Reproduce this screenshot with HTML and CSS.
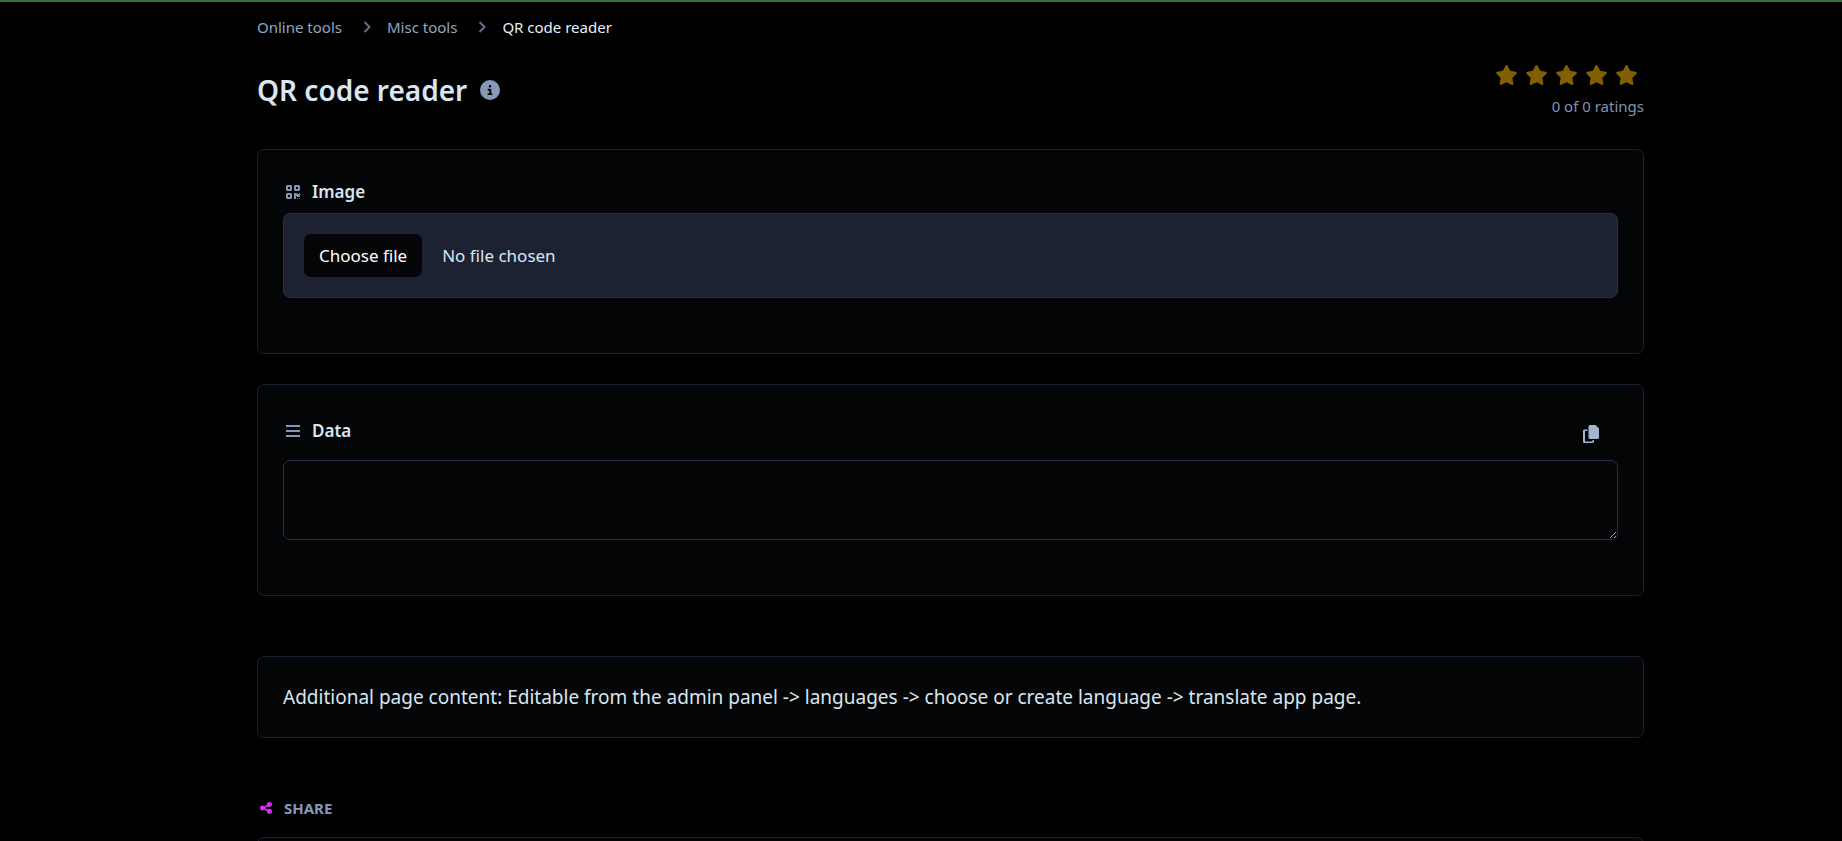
FILE: index.html
```html
<!DOCTYPE html>
<html lang="en">

<head>
    <meta charset="UTF-8">
    <meta name="viewport" content="width=device-width, initial-scale=1.0">
    <title>QR code reader</title>
    <link rel="stylesheet" href="styles.css">
</head>

<body>
    <main class="container">
        <nav aria-label="breadcrumb">
            <ol class="breadcrumbs">
                <li>
                    <a href="#">Online tools</a>
                    <svg class="chevron" viewBox="0 0 8 12" aria-hidden="true"><path d="M1.500 1l5 5-5 5" /></svg>
                </li>
                <li>
                    <a href="#">Misc tools</a>
                    <svg class="chevron" viewBox="0 0 8 12" aria-hidden="true"><path d="M1.500 1l5 5-5 5" /></svg>
                </li>
                <li class="active" aria-current="page">QR code reader</li>
            </ol>
        </nav>

        <header class="heading">
            <div class="title">
                <h1>QR code reader</h1>
                <svg class="info" viewBox="0 0 512 512" aria-hidden="true"><path d="M256 512A256 256 0 1 0 256 0a256 256 0 1 0 0 512zM216 336h24V272H216c-13.300 0-24-10.700-24-24s10.700-24 24-24h48c13.300 0 24 10.700 24 24v88h8c13.300 0 24 10.700 24 24s-10.700 24-24 24H216c-13.300 0-24-10.700-24-24s10.700-24 24-24zm40-208a32 32 0 1 1 0 64 32 32 0 1 1 0-64z" /></svg>
            </div>
            <div class="ratings">
                <div class="stars">
                    <button type="button" aria-label="1 star"><svg viewBox="0 0 576 512"><use href="#star" /></svg></button>
                    <button type="button" aria-label="2 stars"><svg viewBox="0 0 576 512"><use href="#star" /></svg></button>
                    <button type="button" aria-label="3 stars"><svg viewBox="0 0 576 512"><use href="#star" /></svg></button>
                    <button type="button" aria-label="4 stars"><svg viewBox="0 0 576 512"><use href="#star" /></svg></button>
                    <button type="button" aria-label="5 stars"><svg viewBox="0 0 576 512"><use href="#star" /></svg></button>
                </div>
                <div class="rating-count">0 of 0 ratings</div>
            </div>
        </header>

        <form class="card card-form">
            <label class="label" for="image">
                <svg class="label-icon" viewBox="0 0 448 512" aria-hidden="true"><path d="M0 80C0 53.500 21.500 32 48 32h96c26.500 0 48 21.500 48 48v96c0 26.500-21.500 48-48 48H48c-26.500 0-48-21.500-48-48V80zM64 96v64h64V96H64zM0 336c0-26.500 21.500-48 48-48h96c26.500 0 48 21.500 48 48v96c0 26.500-21.500 48-48 48H48c-26.500 0-48-21.500-48-48V336zm64 16v64h64V352H64zM304 32h96c26.500 0 48 21.500 48 48v96c0 26.500-21.500 48-48 48H304c-26.500 0-48-21.500-48-48V80c0-26.500 21.500-48 48-48zm80 64H320v64h64V96zM256 304c0-8.800 7.200-16 16-16h64c8.800 0 16 7.200 16 16s7.200 16 16 16h32c8.800 0 16-7.200 16-16s7.200-16 16-16s16 7.200 16 16v96c0 8.800-7.200 16-16 16H368c-8.800 0-16-7.200-16-16s-7.200-16-16-16s-16 7.200-16 16v64c0 8.800-7.200 16-16 16H272c-8.800 0-16-7.200-16-16V304zM368 480a16 16 0 1 1 0-32 16 16 0 1 1 0 32zm64 0a16 16 0 1 1 0-32 16 16 0 1 1 0 32z" /></svg>
                Image
            </label>
            <label class="file">
                <input class="file-input" type="file" id="image" accept="image/*">
                <span class="file-button">Choose file</span>
                <span>No file chosen</span>
            </label>
        </form>

        <section class="card card-form">
            <div class="label-row">
                <label class="label" for="data">
                    <svg class="label-icon" viewBox="0 0 14 16" aria-hidden="true"><path d="M0 2h14v2H0zM0 7h14v2H0zM0 12h14v2H0z" /></svg>
                    Data
                </label>
                <button class="copy" type="button" aria-label="Copy">
                    <svg viewBox="0 0 16 18" aria-hidden="true"><path d="M7 0h5.500L16 3.500v9a1.500 1.500 0 0 1-1.500 1.500h-7.500A1.500 1.500 0 0 1 5.500 12.500V1.500A1.500 1.500 0 0 1 7 0zM1.500 4.500H4.500V6H2V16.500h7.500v-1.500h1.500v1.500A1.500 1.500 0 0 1 9.500 18h-8A1.500 1.500 0 0 1 0 16.500V6a1.500 1.500 0 0 1 1.500-1.500z" /></svg>
                </button>
            </div>
            <textarea class="data" id="data"></textarea>
        </section>

        <section class="card card-text">
            Additional page content: Editable from the admin panel -&gt; languages -&gt; choose or create language -&gt; translate app page.
        </section>

        <h2 class="share">
            <svg viewBox="0 0 448 512" aria-hidden="true"><path d="M352 224c53 0 96-43 96-96s-43-96-96-96s-96 43-96 96c0 4 .2 8 .7 11.900l-94.100 47C145.400 170.200 121.900 160 96 160c-53 0-96 43-96 96s43 96 96 96c25.900 0 49.400-10.200 66.600-26.900l94.100 47c-.5 3.900-.7 7.800-.7 11.900c0 53 43 96 96 96s96-43 96-96s-43-96-96-96c-25.900 0-49.400 10.200-66.600 26.900l-94.100-47c.5-3.900 .7-7.800 .7-11.900s-.2-8-.7-11.900l94.100-47C302.600 213.800 326.100 224 352 224z" /></svg>
            Share
        </h2>
        <div class="card card-share"></div>
    </main>

    <svg class="sprite" width="0" height="0" aria-hidden="true">
        <symbol id="star" viewBox="0 0 576 512">
            <path d="M316.900 18C311.600 7 300.400 0 288.100 0s-23.400 7-28.800 18L195 150.300 51.400 171.500c-12 1.800-22 10.200-25.700 21.700s-.7 24.200 7.900 32.700L137.800 329 113.200 474.700c-2 12 3 24.200 12.900 31.300s23 8 33.800 2.300l128.300-68.500 128.300 68.500c10.800 5.700 23.900 4.900 33.800-2.300s14.900-19.300 12.900-31.300L438.500 329 542.700 225.900c8.600-8.500 11.700-21.200 7.900-32.700s-13.700-19.900-25.700-21.700L381.200 150.300 316.900 18z" />
        </symbol>
    </svg>
</body>

</html>
```
FILE: styles.css
```css
* {
    box-sizing: border-box;
}

body {
    margin: 0;
    border-top: 2px solid #3a6f41;
    background: #000;
    color: #dae6f1;
    font-family: "Segoe UI", "Noto Sans", sans-serif;
    font-size: 17px;
    line-height: 28px;
}

button {
    padding: 0;
    border: 0;
    background: none;
    color: inherit;
    cursor: pointer;
}

svg {
    display: block;
    fill: currentColor;
}

.sprite {
    position: absolute;
}

.container {
    padding: 13px 198px 0 257px;
}

.breadcrumbs {
    display: flex;
    margin: 0;
    padding: 0;
    list-style: none;
    font-size: 15px;
    line-height: 24px;
}

.breadcrumbs li {
    display: flex;
    align-items: center;
}

.breadcrumbs a {
    color: #94a6c1;
    text-decoration: none;
}

.breadcrumbs .active {
    color: #e6f0f8;
}

.chevron {
    width: 8px;
    height: 12px;
    margin: 0 16px 0 21px;
    fill: none;
    stroke: #626f8b;
    stroke-width: 2;
}

.heading {
    display: flex;
    justify-content: space-between;
    margin-top: 23px;
    margin-bottom: 31px;
}

.title {
    display: flex;
    align-items: center;
    gap: 13px;
    height: 56px;
}

.title h1 {
    margin: 0;
    font-size: 28px;
    font-weight: 600;
    line-height: 40px;
}

.info {
    width: 20px;
    height: 20px;
    color: #8899b8;
}

.ratings {
    display: flex;
    flex-direction: column;
    align-items: flex-end;
    font-size: 15px;
    line-height: 24px;
    color: #7f93b5;
}

.stars {
    display: flex;
    gap: 7px;
    padding: 3px 6px 9px 0;
    color: #806000;
}

.stars svg {
    width: 23px;
    height: 20px;
}

.card {
    border: 1px solid #1a2131;
    border-radius: 7px;
    background: #030507;
}

.card-form {
    margin-bottom: 30px;
    padding: 28px 25px 55px;
}

.label {
    display: flex;
    align-items: center;
    gap: 12px;
    padding-left: 3px;
    font-weight: 600;
}

.label-icon {
    width: 14px;
    height: 16px;
    color: #8496b3;
}

.file {
    display: flex;
    align-items: center;
    gap: 20px;
    margin-top: 7px;
    padding: 20px;
    border: 1px solid #273044;
    border-radius: 7px;
    background: #1c2231;
    cursor: pointer;
}

.file-input {
    position: absolute;
    opacity: 0;
    pointer-events: none;
}

.file-button {
    padding: 8px 15px 7px;
    border-radius: 7px;
    background: #030507;
    color: #fff;
}

.label-row {
    display: flex;
    justify-content: space-between;
    align-items: center;
    height: 36px;
    margin-bottom: 11px;
}

.copy {
    margin: 6px 19px 0 0;
    color: #a3b5ce;
}

.copy svg {
    width: 16px;
    height: 18px;
}

.data {
    display: block;
    width: 100%;
    height: 80px;
    padding: 12px;
    border: 1px solid #273044;
    border-radius: 7px;
    background: #030507;
    color: inherit;
    font: inherit;
    resize: vertical;
}

.card-text {
    margin-top: 60px;
    padding: 26px 25px;
    font-size: 19px;
}

.share {
    display: flex;
    align-items: center;
    gap: 12px;
    margin: 58px 0 17px;
    padding-left: 3px;
    color: #8799b8;
    font-size: 15px;
    font-weight: 700;
    line-height: 24px;
    text-transform: uppercase;
}

.share svg {
    width: 12px;
    height: 14px;
    color: #d92fee;
}

.card-share {
    height: 100px;
}
```
